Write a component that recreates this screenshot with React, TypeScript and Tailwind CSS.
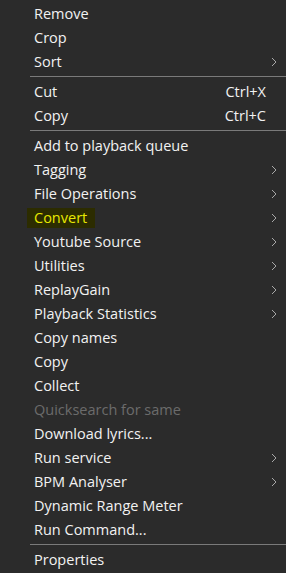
import { Fragment } from "react";

type Item =
  | { sep: true }
  | { label: string; shortcut?: string; sub?: boolean; disabled?: boolean; hot?: boolean };

const items: Item[] = [
  { label: "Remove" },
  { label: "Crop" },
  { label: "Sort", sub: true },
  { sep: true },
  { label: "Cut", shortcut: "Ctrl+X" },
  { label: "Copy", shortcut: "Ctrl+C" },
  { sep: true },
  { label: "Add to playback queue" },
  { label: "Tagging", sub: true },
  { label: "File Operations", sub: true },
  { label: "Convert", sub: true, hot: true },
  { label: "Youtube Source", sub: true },
  { label: "Utilities", sub: true },
  { label: "ReplayGain", sub: true },
  { label: "Playback Statistics", sub: true },
  { label: "Copy names" },
  { label: "Copy" },
  { label: "Collect" },
  { label: "Quicksearch for same", disabled: true },
  { label: "Download lyrics..." },
  { label: "Run service", sub: true },
  { label: "BPM Analyser", sub: true },
  { label: "Dynamic Range Meter" },
  { label: "Run Command..." },
  { sep: true },
  { label: "Properties" },
];

function Chevron() {
  return (
    <svg width="6" height="10" viewBox="0 0 6 10" className="absolute right-[9px] top-1/2 -translate-y-1/2">
      <polyline points="1,1 5,5 1,9" fill="none" stroke="#a8a8a8" strokeWidth="1" />
    </svg>
  );
}

export default function App() {
  return (
    <div
      className="w-[286px] h-[573px] bg-[#2b2b2b] pt-[2px] overflow-hidden text-[14.5px] leading-none"
      style={{ fontFamily: '"Segoe UI", "Open Sans", "Noto Sans", sans-serif' }}
    >
      {items.map((it, i) => (
        <Fragment key={i}>
          {"sep" in it ? (
            <div className="h-[6px] pt-[2px] pl-[30px]">
              <div className="h-px bg-[#7a7a7a]" />
            </div>
          ) : (
            <div className="relative h-6 flex items-center pl-[34px] pr-[20px]">
              {it.hot && (
                <div className="absolute left-[27px] top-[2px] w-[68px] h-[20px] bg-[#2c2c00]" />
              )}
              <span
                className={
                  "relative " +
                  (it.disabled ? "text-[#6b6b6b]" : it.hot ? "text-[#e8e800]" : "text-[#f2f2f2]")
                }
              >
                {it.label}
              </span>
              {it.shortcut && (
                <span className="ml-auto text-[#f2f2f2]">{it.shortcut}</span>
              )}
              {it.sub && <Chevron />}
            </div>
          )}
        </Fragment>
      ))}
    </div>
  );
}
